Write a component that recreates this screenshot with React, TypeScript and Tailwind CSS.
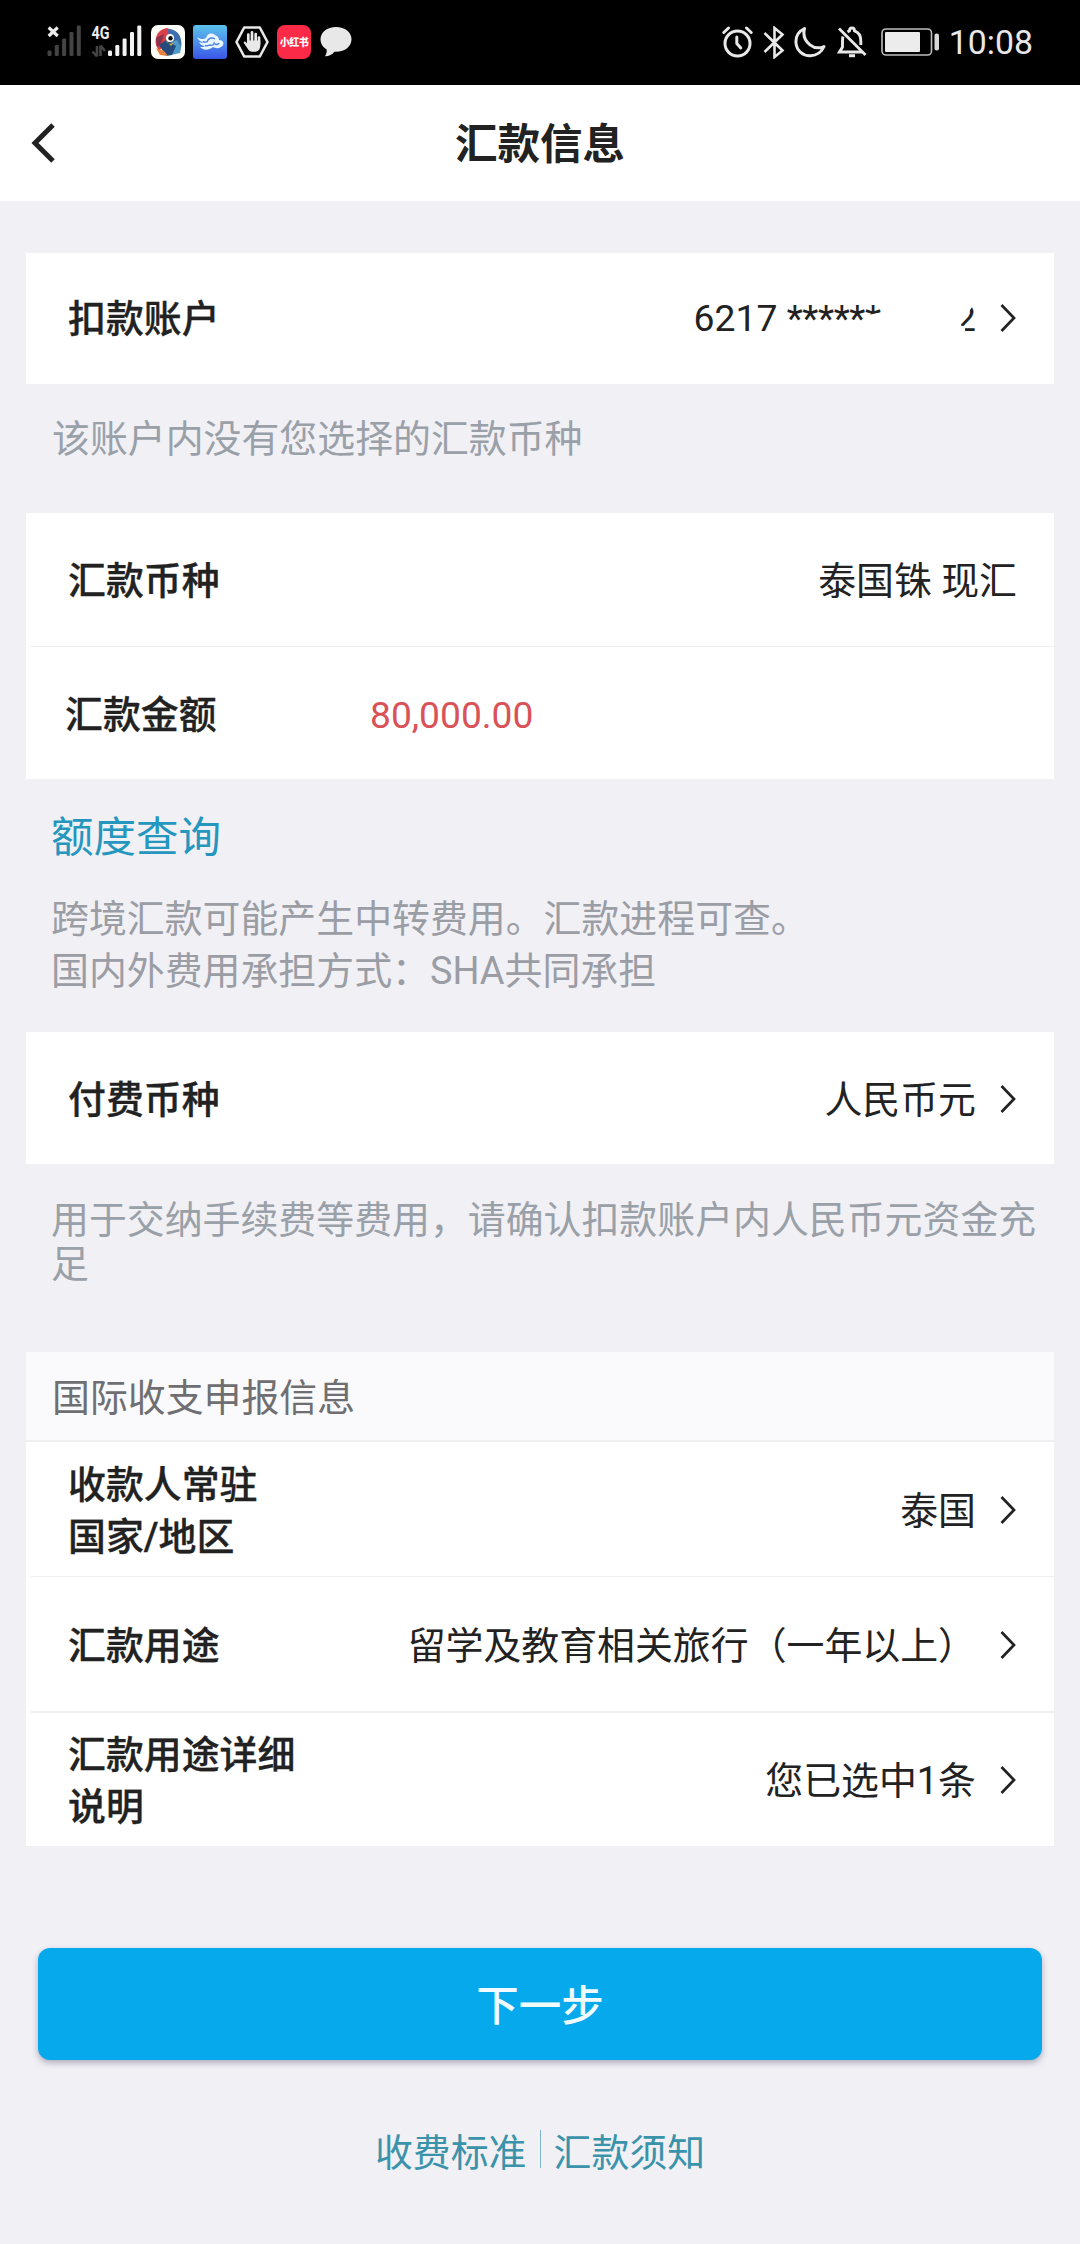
import React from "react";

function SignalBars({ color }: { color: string }) {
  return (
    <g fill={color}>
      <rect x="0" y="25" width="4" height="5.5" rx="1.2" />
      <rect x="7.3" y="19.5" width="4" height="11" rx="1.2" />
      <rect x="14.6" y="13" width="4" height="17.5" rx="1.2" />
      <rect x="22" y="6.5" width="4" height="24" rx="1.2" />
      <rect x="29.3" y="0" width="4" height="30.5" rx="1.2" />
    </g>
  );
}

function StatusBar() {
  return (
    <div className="flex h-[85px] shrink-0 items-center justify-between bg-black pr-[47px] pb-px pl-[46px] text-[#e8e8e8]">
      <div className="flex items-center">
        <svg className="h-[52px] w-[96px]" viewBox="0 -8 96 52">
          <g transform="translate(1.5 1.5)">
            <SignalBars color="#444444" />
          </g>
          <path d="M2 2h11v12H2z" fill="#000" />
          <path d="M2.700 3.500l9 8.500M11.700 3.500l-9 8.500" stroke="#ececec" strokeWidth="3.200" />
          <g transform="translate(62 1.5)">
            <SignalBars color="#f2f2f2" />
          </g>
          <text x="45.500" y="15" textLength="18" lengthAdjust="spacingAndGlyphs" fontFamily="Roboto" fontWeight="700" fontSize="18" fill="#ececec">
            4G
          </text>
          <path d="M51 22v10.500M51 32.500L46.500 27.500M54.500 32V21.500M54.500 21.500L59 27" stroke="#444444" strokeWidth="2.600" fill="none" />
        </svg>
        <svg className="ml-[9px] size-[34px]" viewBox="0 0 34 34">
          <rect width="34" height="34" rx="7" fill="#fdfdf8" />
          <path d="M5 20C3 11 8 4 16 3l5 2-6 13-7 8z" fill="#d8404a" />
          <path d="M17 4c7 0 12 4 13 11 1 5 0 8-1 11l-11-7z" fill="#3d6fae" />
          <path d="M26 15l4 7-1 6-9 2-2-11z" fill="#4d9bc9" />
          <path d="M8 20l7-5 10 6-4 9-6 1z" fill="#254c7c" />
          <path d="M5 23l8 3 4 5-8-1z" fill="#e8823a" />
          <path d="M5 13l8-4-3 10-4 3z" fill="#8a3350" />
          <path d="M15 15c1 5 8 5 10 0l-5 6z" fill="#f0b13c" />
          <circle cx="19" cy="13" r="4" fill="#fff" />
          <circle cx="19.500" cy="13.300" r="2.200" fill="#111" />
        </svg>
        <svg className="ml-[8px] size-[34px]" viewBox="0 0 34 34">
          <defs>
            <linearGradient id="cloud" x1="0" y1="0" x2="0" y2="1">
              <stop offset="0" stopColor="#5cc3ea" />
              <stop offset=".5" stopColor="#4c8fec" />
              <stop offset="1" stopColor="#3a55e6" />
            </linearGradient>
          </defs>
          <rect width="34" height="34" rx="3" fill="url(#cloud)" />
          <path d="M4 12c4 3 7 2 9 1 1-4 5-6 9-3 3 1 4 3 4 5 5 0 6 5 2 7-3 2-6 1-8 0-5 4-10 3-13 0 3 0 4 0 5-1-3 0-5-2-6-4 2 1 4 1 5 0-3 0-6-2-7-5z" fill="#eaf6ff" />
          <path d="M14 17c1-4 5-5 8-3M16 20c4 1 6-1 5-3M22 19c2 1 4 0 4-1M10 16.500c2 .8 3 .8 4 .3M12 20.500c2 .5 3 .3 4-.5" stroke="#4b83e6" strokeWidth="1.400" fill="none" />
        </svg>
        <svg className="ml-[8px] h-[34px] w-[34px]" viewBox="0 0 34 34">
          <path d="M9.200 2.500h15.600L32.500 17l-7.700 14.500H9.200L1.500 17z" fill="none" stroke="#e8e8e8" strokeWidth="2.600" strokeLinejoin="round" />
          <path d="M13.300 17V9.500M17 16V7.300M20.700 17V9M24 19v-6.500" stroke="#e8e8e8" strokeWidth="2.700" strokeLinecap="round" />
          <path d="M12 15.500h13.300V20c0 4-1.800 6.800-5.800 6.800h-2.300c-2 0-3.200-1-4.200-2.500L8.800 18c-.5-1 .8-2 1.800-1.200L12 18.500z" fill="#e8e8e8" />
        </svg>
        <div className="ml-[8px] flex size-[34px] items-center justify-center rounded-[8px] bg-[#fb2a46] font-['Noto_Sans_CJK_SC',sans-serif] text-[10px] leading-[16px] font-black tracking-[-0.5px] whitespace-nowrap text-white">
          小红书
        </div>
        <svg className="ml-[8px] h-[32px] w-[34px]" viewBox="0 0 34 32">
          <path d="M17 1C8 1 1.500 6.300 1.500 13.300c0 4.300 2.400 8 6.200 10.200.3 2.500-.4 4.800-1.800 6.700 4 .1 7.300-1.500 9.500-4.500l1.600.1c9 0 15.500-5.500 15.500-12.500S26 1 17 1z" fill="#e8e8e8" />
        </svg>
      </div>

      <div className="flex items-center">
        <svg className="h-[32px] w-[31px]" viewBox="0 0 31 32" fill="none" stroke="#e8e8e8" strokeLinecap="round">
          <circle cx="15.500" cy="17.500" r="12.500" strokeWidth="3" />
          <path d="M14.800 11v6.500l4 4.500" strokeWidth="3" strokeLinejoin="round" />
          <path d="M1.800 6.500L6.500 2M29.200 6.500L24.500 2" strokeWidth="3" />
        </svg>
        <svg className="ml-[10px] h-[33px] w-[22px]" viewBox="0 0 22 33" fill="none" stroke="#e8e8e8" strokeWidth="2.600">
          <path d="M1.500 7L19.500 24.500 11.500 31V2l8 6.500L1.500 26" />
        </svg>
        <svg className="ml-[9px] h-[32px] w-[33px]" viewBox="0 0 33 32" fill="none" stroke="#e8e8e8" strokeWidth="3" strokeLinejoin="round">
          <path d="M10.500 2.500C4.500 5.500 1.500 11 2 17c.6 7.500 7 13 14.500 12.700 6-.2 11-3.500 13.500-9.200-4.500 2-10 1.500-14-1.700C10.800 14.800 9 8.500 10.500 2.500z" />
        </svg>
        <svg className="ml-[10px] h-[32px] w-[30px]" viewBox="0 0 30 32" fill="none" stroke="#e8e8e8" strokeWidth="2.900">
          <path d="M2 2.500L28.500 29" />
          <path d="M6 10.500c-.5 1.500-.5 3-.5 4.500v6l-3 5h23" />
          <path d="M10.500 6l2-1.200c0-3.700 5-3.700 5 0 4.500 1.500 6.300 5.500 6.300 10.200v4" />
          <path d="M12 29.700h6" strokeWidth="3" />
        </svg>
        <svg className="ml-[14px] h-[28px] w-[59px]" viewBox="0 0 59 28">
          <rect x="1" y="1" width="49.500" height="26" rx="4" fill="none" stroke="#bdbdbd" strokeWidth="1.600" />
          <rect x="4" y="4" width="35" height="20" rx="1" fill="#ececec" />
          <rect x="53.500" y="5.500" width="4.500" height="17" rx="2" fill="#d8d8d8" />
        </svg>
        <span className="ml-[9px] pt-[2px] font-[Roboto,sans-serif] text-[33.800px] leading-[40px]">10:08</span>
      </div>
    </div>
  );
}

function Chevron() {
  return (
    <svg className="ml-[23px] h-[30px] w-[18px]" viewBox="0 0 18 30" fill="none" stroke="#222" strokeWidth="2.700">
      <path d="M2.500 1L15 14 2.500 27" />
    </svg>
  );
}

function Row({
  label,
  value,
  arrow = false,
  className = "",
}: {
  label: React.ReactNode;
  value: React.ReactNode;
  arrow?: boolean;
  className?: string;
}) {
  return (
    <div className={"flex items-center justify-between pr-[37px] pl-[42px] " + className}>
      <div className="font-medium [-webkit-text-stroke:0.3px_#222]">{label}</div>
      <div className="flex items-center">
        <span>{value}</span>
        {arrow && <Chevron />}
      </div>
    </div>
  );
}

function MaskedAccount() {
  return (
    <span className="flex h-[52px] text-[37.300px] leading-[51px]">
      <span className="whitespace-pre">6217 </span>
      <span className="tracking-[-0.4px]">*****</span>
      <span className="mr-[74px] [clip-path:polygon(0_0,100%_0,100%_20px,0_23px)]">*</span>
      <span className="[clip-path:polygon(6px_33px,6px_27px,14px_19px,18px_13px,21px_13px,21px_42px,10px_42px,10px_34px)]">
        2
      </span>
    </span>
  );
}

export default function App() {
  return (
    <div className="flex h-[2244px] w-[1080px] flex-col overflow-hidden bg-[#f0f0f5] font-[Roboto,'Noto_Sans_CJK_SC',sans-serif] text-[37.900px] leading-[52px] text-[#222]">
      <StatusBar />
      <header className="grid h-[116px] shrink-0 grid-cols-3 items-center bg-white">
        <svg className="ml-[30px] h-[42px] w-[28px]" viewBox="0 0 28 42" fill="none" stroke="#222" strokeWidth="5">
          <path d="M23 3L5 21l18 18" />
        </svg>
        <h1 className="pt-[3px] text-center text-[42.500px] font-bold">汇款信息</h1>
      </header>

      <main className="flex flex-col pr-[26px] pl-[26px]">
        <section className="mt-[52px] bg-white">
          <Row className="h-[131px]" label="扣款账户" value={<MaskedAccount />} arrow />
        </section>
        <p className="mt-[29px] ml-[26px] text-[#9aa0a8]">该账户内没有您选择的汇款币种</p>

        <section className="mt-[48px] bg-white">
          <Row className="h-[133px] pt-[2px]" label="汇款币种" value="泰国铢 现汇" />
          <div className="ml-1 h-px bg-[#f0f0f1]" />
          <div className="flex h-[132px] items-center pt-[3px] pl-[39px]">
            <div className="w-[305px] font-medium [-webkit-text-stroke:0.3px_#222]">汇款金额</div>
            <div className="text-[37.200px] text-[#d95258]">80,000.00</div>
          </div>
        </section>
        <a className="mt-[33px] ml-[25px] text-[42.500px] text-[#2596be]">额度查询</a>
        <p className="mt-[29px] ml-[25px] text-[#9b9da5]">
          跨境汇款可能产生中转费用。汇款进程可查。
          <br />
          国内外费用承担方式：SHA共同承担
        </p>

        <section className="mt-[35px] bg-white">
          <Row className="h-[132px] pt-[3px]" label="付费币种" value="人民币元" arrow />
        </section>
        <p className="mt-[34px] ml-[25px] w-[1002px] leading-[44px] text-[#9aa0a8]">
          用于交纳手续费等费用，请确认扣款账户内人民币元资金充足
        </p>

        <section className="mt-[66px] bg-white">
          <div className="flex h-[90px] items-center border-b-2 border-[#efeff1] bg-[#fafafc] pt-[3px] pl-[26px] text-[#6f6f72]">
            国际收支申报信息
          </div>
          <Row
            className="h-[134px] pt-[3px]"
            label={
              <>
                收款人常驻
                <br />
                国家/地区
              </>
            }
            value="泰国"
            arrow
          />
          <div className="ml-1 h-px bg-[#f0f0f1]" />
          <Row className="h-[134px] pt-[3px]" label="汇款用途" value="留学及教育相关旅行（一年以上）" arrow />
          <div className="ml-1 h-[2px] bg-[#f0f0f1]" />
          <Row
            className="h-[133px] pt-[3px]"
            label={
              <>
                汇款用途详细
                <br />
                说明
              </>
            }
            value="您已选中1条"
            arrow
          />
        </section>

        <button className="mx-[12px] mt-[102px] h-[112px] rounded-[12px] bg-[#05a9ec] pt-[6px] text-[42.500px] font-medium text-[#f0fcff] shadow-[0_3px_6px_rgba(60,50,80,0.35)]">
          下一步
        </button>
        <div className="mt-[67px] flex items-center justify-center text-[#3a93ab]">
          <a>收费标准</a>
          <span className="mx-[13px] -mt-2 h-[38px] w-px bg-[#7db6c8]" />
          <a>汇款须知</a>
        </div>
      </main>
    </div>
  );
}
